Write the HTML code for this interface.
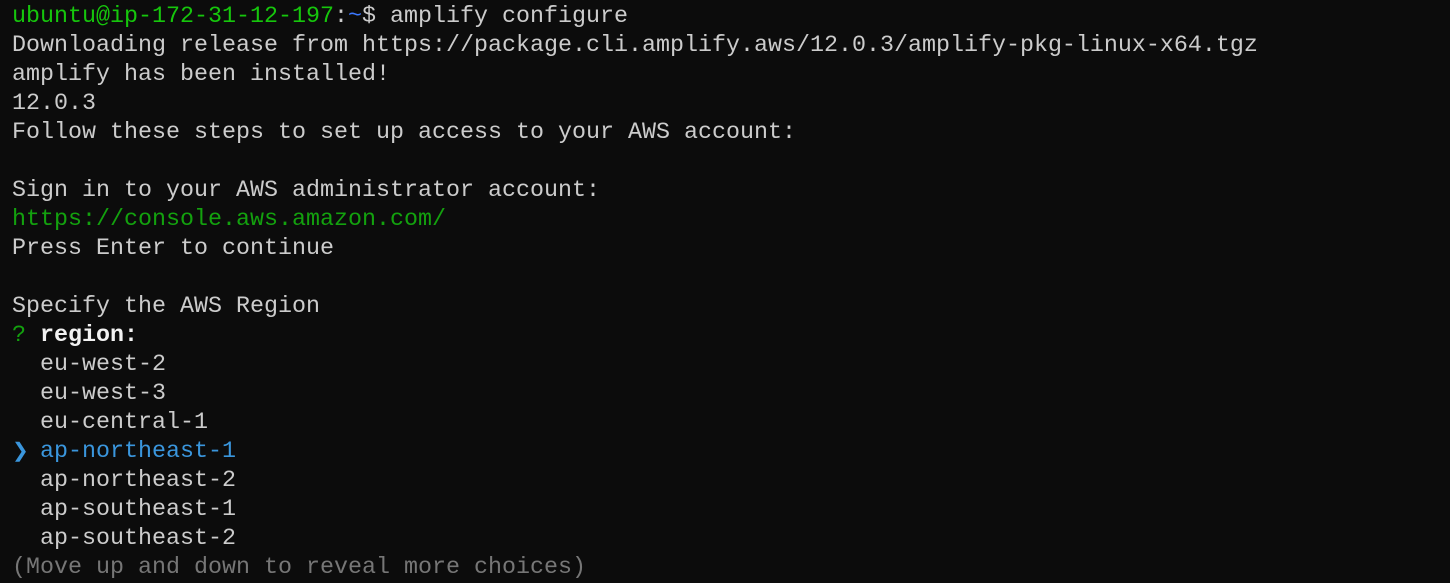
<!DOCTYPE html><html><head><style>
body{margin:0;background:#0c0c0c;width:1450px;height:582px;overflow:hidden}
pre{margin:0;padding:3px 0 0 12px;font-family:"Liberation Mono",monospace;font-size:23.33px;line-height:29px;color:#cccccc}
.g{color:#16c60c}.b{color:#3b78ff}.c{color:#3a96dd}.w{color:#f2f2f2;font-weight:bold}.d{color:#767676}.gg{color:#13a10e}
.ar{display:inline-block;width:14px;overflow:hidden;vertical-align:top;font-size:20px}
</style></head><body><pre><span class="g">ubuntu@ip-172-31-12-197</span>:<span class="b">~</span>$ amplify configure
Downloading release from https://package.cli.amplify.aws/12.0.3/amplify-pkg-linux-x64.tgz
amplify has been installed!
12.0.3
Follow these steps to set up access to your AWS account:

Sign in to your AWS administrator account:
<span class="gg">https://console.aws.amazon.com/</span>
Press Enter to continue

Specify the AWS Region
<span class="gg">?</span> <span class="w">region:</span>
  eu-west-2
  eu-west-3
  eu-central-1
<span class="c"><span class="ar">❯</span> ap-northeast-1</span>
  ap-northeast-2
  ap-southeast-1
  ap-southeast-2
<span class="d">(Move up and down to reveal more choices)</span></pre></body></html>
